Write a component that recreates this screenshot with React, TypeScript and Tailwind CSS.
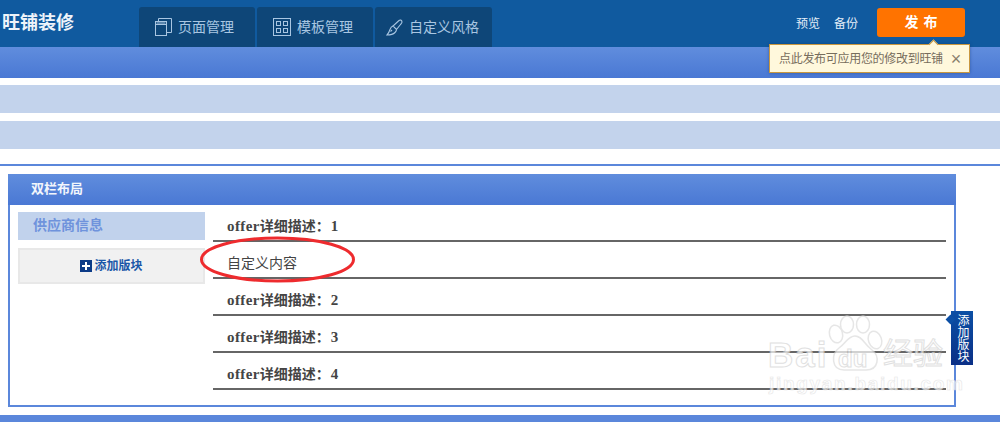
import React from "react";

const font = { fontFamily: '"Liberation Sans","Noto Sans CJK SC",sans-serif' };

function Tab({ icon, label, wide }: { icon: React.ReactNode; label: string; wide?: boolean }) {
  return (
    <div className={`flex h-[40px] items-center gap-[6px] rounded-t-[3px] bg-[#0e4678] text-[14px] text-[#a9c6e2] ${wide ? "w-[117px] pl-[11px]" : "w-[116px] pl-[16px]"}`}>
      {icon}
      <span>{label}</span>
    </div>
  );
}

function Row({ n }: { n?: number }) {
  return (
    <div className={`flex h-[37px] items-center border-b-2 border-[#666] pl-[14px] pt-[6px] text-[14px] leading-[20px] text-[#444] ${n ? "font-bold" : ""}`}>
      {n ? (
        <>
          <span className="text-[15px] tracking-[0.4px] [font-family:'Liberation_Serif']">offer</span>
          详细描述：
          <span className="ml-[1px] text-[15px] [font-family:'Liberation_Serif']">{n}</span>
        </>
      ) : (
        "自定义内容"
      )}
    </div>
  );
}

export default function App() {
  return (
    <div className="relative h-[422px] w-[1000px] overflow-hidden bg-white" style={font}>
      <header className="flex h-[47px] bg-[#105a9f]">
        <div className="w-[139px] pl-[2px] pt-[13px] text-[18px] font-bold leading-[20px] text-[#eef4fa]">旺铺装修</div>
        <nav className="flex gap-[2px] pt-[7px]">
          <Tab
            label="页面管理"
            icon={
              <svg width="17" height="18" viewBox="0 0 17 18" fill="none" stroke="#a9c6e2" strokeWidth="1">
                <rect x="0.5" y="3.500" width="11" height="14" />
                <path d="M0.500 6.500H11.500M3.500 3.500V0.500H16.500V14.500H11.500M1.500 5H10.500" />
              </svg>
            }
          />
          <Tab
            label="模板管理"
            icon={
              <svg width="18" height="18" viewBox="0 0 18 18" fill="none" stroke="#a9c6e2" strokeWidth="1">
                <rect x="0.500" y="0.500" width="17" height="17" />
                <rect x="3.500" y="3.500" width="4" height="4" />
                <rect x="10.500" y="3.500" width="4" height="4" />
                <rect x="3.500" y="10.500" width="4" height="4" />
                <rect x="10.500" y="10.500" width="4" height="4" />
              </svg>
            }
          />
          <Tab
            wide
            label="自定义风格"
            icon={
              <svg width="17" height="17" viewBox="0 0 17 17" fill="none" stroke="#a9c6e2" strokeWidth="1.100">
                <path d="M13 1.500C14 0.500 16 1 16 3C16 4 15.500 4.500 14.500 5.500L10.500 10.500L7 7L13 1.500Z" />
                <path d="M7 7C5 7.500 4.500 9 4 10.500C3.500 12 2.500 14.500 1 16C4 16 7.500 15 9 13.500C10 12.500 10.500 11.500 10.500 10.500" />
                <path d="M4.500 12.500L6 11" />
              </svg>
            }
          />
        </nav>
        <div className="ml-auto flex items-start">
          <span className="mt-[17px] text-[12px] leading-[14px] text-[#e4eef8]">预览</span>
          <span className="ml-[14px] mt-[17px] text-[12px] leading-[14px] text-[#e4eef8]">备份</span>
          <button className="ml-[19px] mr-[35px] mt-[8px] h-[29px] w-[88px] rounded-[3px] bg-[#ff7300] pl-[5px] text-[14px] font-bold tracking-[5px] text-white">发布</button>
        </div>
      </header>

      <div className="h-[31px] bg-gradient-to-b from-[#608ddd] to-[#4a78d4]" />
      <div className="mt-[7px] h-[28px] bg-[#c3d3ec]" />
      <div className="mt-[8px] h-[28px] bg-[#c3d3ec]" />
      <div className="mt-[15px] h-[2px] bg-[#5b87db]" />

      <section className="ml-[8px] mt-[8px] h-[233px] w-[948px] border-2 border-t-0 border-[#5b87db]">
        <div className="-mx-[2px] h-[31px] bg-gradient-to-b from-[#608ddd] to-[#4a78d4] pl-[23px] text-[13px] font-bold leading-[30px] text-[#f2f6fc]">双栏布局</div>
        <div className="flex px-[8px]">
          <aside className="w-[187px] pt-[7px]">
            <div className="h-[28px] bg-[#c1d2ec] pl-[15px] text-[14px] font-bold leading-[27px] text-[#6f93dc]">供应商信息</div>
            <div className="mt-[8px] flex h-[36px] items-center justify-center border-2 border-[#e8e8e8] bg-[#f1f1f1] text-[12px] font-bold text-[#1b57a8]">
              <span className="mr-[2px] flex h-[12px] w-[12px] items-center justify-center bg-[#0c3b87]">
                <svg width="8" height="8" viewBox="0 0 8 8"><path d="M3 0H5V3H8V5H5V8H3V5H0V3H3Z" fill="#fff" /></svg>
              </span>
              添加版块
            </div>
          </aside>
          <div className="ml-[8px] flex-1">
            <Row n={1} />
            <Row />
            <Row n={2} />
            <Row n={3} />
            <Row n={4} />
          </div>
        </div>
      </section>
      <div className="mt-[8px] h-[7px] bg-[#5b87db]" />

      {/* tooltip */}
      <div className="absolute left-[769px] top-[44px] flex h-[29px] w-[201px] items-center border border-[#c9973f] bg-[#fff8dc] pl-[9px] text-[12px] tracking-[-0.3px] text-[#776d5c] shadow-[0_0_3px_rgba(0,40,100,0.4)]">
        点此发布可应用您的修改到旺铺
        <span className="ml-[8px] text-[18px] leading-none text-[#8a7f6c]">×</span>
        <span className="absolute -top-[4px] left-[160px] h-[7px] w-[7px] rotate-45 border-l border-t border-[#c9973f] bg-[#fff8dc]" />
      </div>

      {/* red annotation */}
      <svg className="absolute left-[198px] top-[235px]" width="160" height="50" viewBox="0 0 160 50" fill="none">
        <ellipse cx="79.500" cy="24.500" rx="76" ry="21.500" stroke="#ee2b2e" strokeWidth="3" />
      </svg>

      {/* side tag */}
      <div className="absolute left-[951px] top-[311px] flex h-[54px] w-[22px] items-center justify-center bg-gradient-to-b from-[#0b4fa5] to-[#0a2f86]">
        <span className="whitespace-nowrap text-[12px] leading-[22px] text-white [writing-mode:vertical-rl]">添加版块</span>
        <span className="absolute -left-[4px] top-[5px] h-[7px] w-[7px] rotate-45 bg-[#0b4fa5]" />
      </div>

      {/* watermark */}
      <div className="pointer-events-none absolute left-[760px] top-[310px] h-[95px] w-[195px] opacity-70">
        <svg className="absolute left-[66px] top-[5px]" width="58" height="58" viewBox="0 0 58 58" fill="#fff" stroke="#dcdcdc" strokeWidth="1.500">
          <ellipse cx="10" cy="19" rx="6.500" ry="9" transform="rotate(-15 10 19)" />
          <ellipse cx="21" cy="9.500" rx="6.500" ry="8.500" />
          <ellipse cx="37" cy="9.500" rx="6.500" ry="8.500" />
          <ellipse cx="49" cy="25" rx="6.500" ry="9" transform="rotate(-20 49 25)" />
          <path d="M29 21C22 21 20 28 13 33C5 39 5 55 18 55C25 55 33 55 40 55C53 55 54 41 46 35C38 29 36 21 29 21Z" />
        </svg>
        <span className="absolute left-[8px] top-[27px] text-[35px] font-bold leading-[36px] tracking-[2px] [-webkit-text-stroke:1px_#d4d4d4] [-webkit-text-fill-color:#fff]">Bai</span>
        <span className="absolute left-[78px] top-[37px] text-[24px] font-bold leading-[24px] [-webkit-text-stroke:1px_#d4d4d4] [-webkit-text-fill-color:#fff]">du</span>
        <span className="absolute left-[123px] top-[26px] text-[30px] leading-[36px] [-webkit-text-stroke:1px_#d4d4d4] [-webkit-text-fill-color:#fff]">经验</span>
        <span className="absolute left-[9px] top-[64px] text-[19px] font-bold leading-[20px] tracking-[1.700px] [-webkit-text-stroke:0.6px_#dcdcdc] [-webkit-text-fill-color:#fff]">jingyan.baidu.com</span>
      </div>
    </div>
  );
}
